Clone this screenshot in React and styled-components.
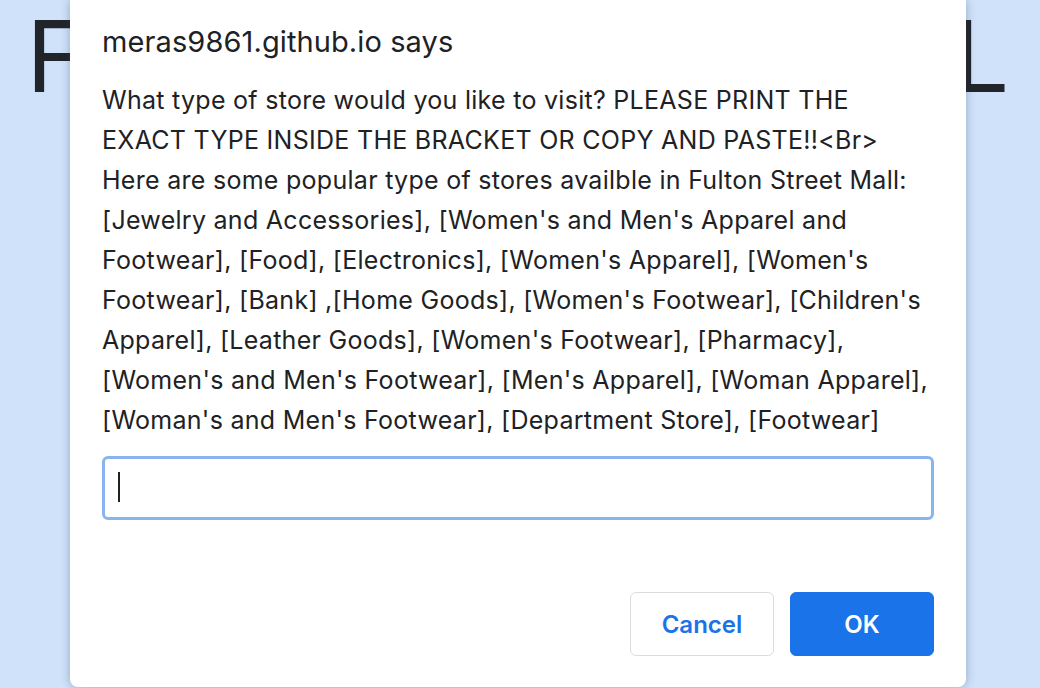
import React from 'react';
import styled, { createGlobalStyle } from 'styled-components';

const GlobalStyle = createGlobalStyle`
  html, body {
    margin: 0;
    padding: 0;
  }
  body {
    background: #cfe2fa;
    font-family: Inter, "Noto Sans", sans-serif;
    overflow: hidden;
  }
`;

const Page = styled.div`
  position: relative;
  width: 1040px;
  height: 688px;
  overflow: hidden;
`;

const Heading = styled.h1`
  margin: 0;
  padding: 7px 11px 0 0;
  text-align: center;
  font-size: 99px;
  line-height: 99px;
  font-weight: 400;
  letter-spacing: -6.25px;
  color: #212529;
  white-space: nowrap;
`;

const Dialog = styled.div`
  position: absolute;
  top: 0;
  left: 70px;
  width: 896px;
  bottom: 1px;
  box-sizing: border-box;
  padding: 25px 32px 31px;
  background: #fff;
  border-radius: 0 0 8px 8px;
  box-shadow: 0 0 10px rgba(40, 60, 90, 0.35);
  display: flex;
  flex-direction: column;
  color: #202124;
`;

const Title = styled.div`
  font-size: 29px;
  line-height: 34px;
  margin-bottom: 21px;
  letter-spacing: 0.1px;
`;

const Message = styled.div`
  font-size: 25px;
  line-height: 40px;
  letter-spacing: 0.28px;
`;

const Line = styled.span`
  display: block;
  white-space: nowrap;
`;

const Field = styled.div`
  position: relative;
  margin-top: 16px;
`;

const Input = styled.input`
  display: block;
  width: 100%;
  height: 64px;
  box-sizing: border-box;
  border: 3px solid #8ab4f0;
  border-radius: 6px;
  outline: none;
  caret-color: transparent;
  font: inherit;
  font-size: 24px;
`;

const Caret = styled.span`
  position: absolute;
  left: 16px;
  top: 16px;
  width: 2px;
  height: 30px;
  background: #202124;
`;

const Actions = styled.div`
  margin-top: auto;
  display: flex;
  justify-content: flex-end;
  gap: 16px;
`;

const Button = styled.button`
  width: 144px;
  height: 64px;
  border-radius: 6px;
  font-family: inherit;
  font-size: 24px;
  font-weight: 600;
  cursor: pointer;
  border: 1px solid ${p => (p.$primary ? '#1a73e8' : '#dadce0')};
  background: ${p => (p.$primary ? '#1a73e8' : '#fff')};
  color: ${p => (p.$primary ? '#fff' : '#1a73e8')};
`;

const lines = [
  'What type of store would you like to visit? PLEASE PRINT THE',
  'EXACT TYPE INSIDE THE BRACKET OR COPY AND PASTE!!<Br>',
  'Here are some popular type of stores availble in Fulton Street Mall:',
  "[Jewelry and Accessories], [Women's and Men's Apparel and",
  "Footwear], [Food], [Electronics], [Women's Apparel], [Women's",
  "Footwear], [Bank] ,[Home Goods], [Women's Footwear], [Children's",
  "Apparel], [Leather Goods], [Women's Footwear], [Pharmacy],",
  "[Women's and Men's Footwear], [Men's Apparel], [Woman Apparel],",
  "[Woman's and Men's Footwear], [Department Store], [Footwear]",
];

export default function App() {
  return (
    <Page>
      <GlobalStyle />
      <Heading>FULTON STREET MALL</Heading>
      <Dialog>
        <Title>meras9861.github.io says</Title>
        <Message>
          {lines.map(l => (
            <Line key={l}>{l}</Line>
          ))}
        </Message>
        <Field>
          <Input type="text" />
          <Caret />
        </Field>
        <Actions>
          <Button>Cancel</Button>
          <Button $primary>OK</Button>
        </Actions>
      </Dialog>
    </Page>
  );
}
